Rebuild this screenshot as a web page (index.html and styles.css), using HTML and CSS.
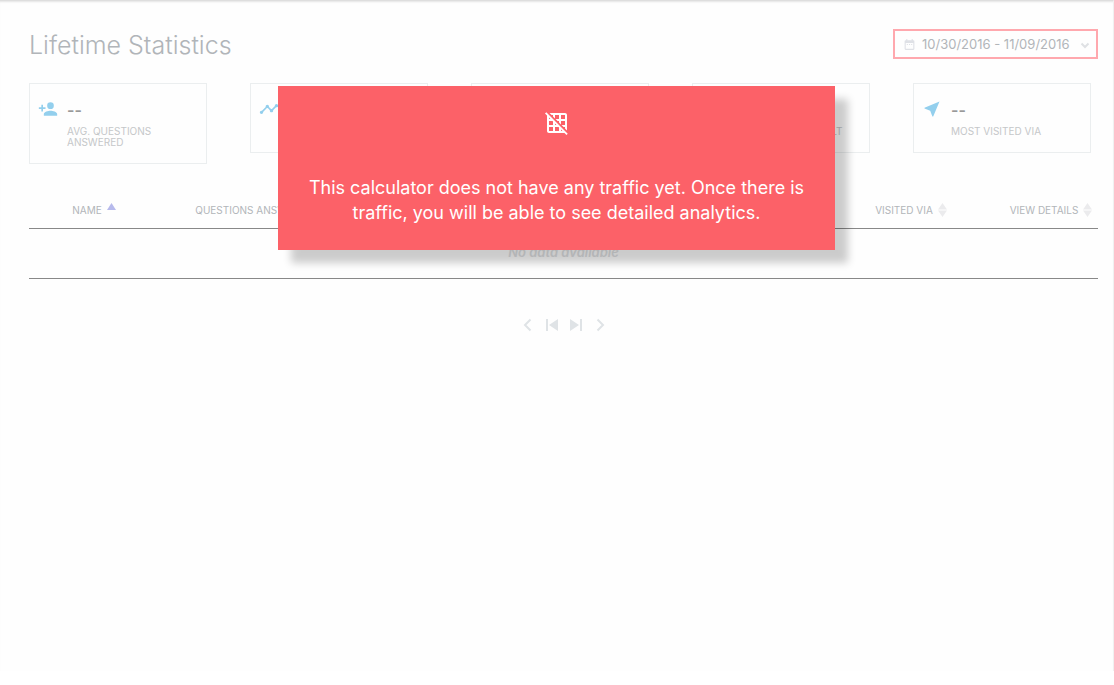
FILE: index.html
```html
<!DOCTYPE html>
<html lang="en">
<head>
<meta charset="utf-8">
<meta name="viewport" content="width=device-width, initial-scale=1">
<title>Lifetime Statistics</title>
<link rel="stylesheet" href="styles.css">
</head>
<body>
<main class="page">
  <header class="header">
    <h1 class="title">Lifetime Statistics</h1>
    <button class="range" type="button">
      <svg class="range-calendar" viewBox="0 0 24 24" aria-hidden="true"><path d="M19 4h-1V2h-2v2H8V2H6v2H5a2 2 0 0 0-2 2v14a2 2 0 0 0 2 2h14a2 2 0 0 0 2-2V6a2 2 0 0 0-2-2zm0 16H5V9h14v11zM7 11h2v2H7zm4 0h2v2h-2zm4 0h2v2h-2z"/></svg>
      <span>10/30/2016 - 11/09/2016</span>
      <svg class="range-chevron" viewBox="0 0 10 10" aria-hidden="true"><path d="M1.500 4.500 5 8l3.500-3.500"/></svg>
    </button>
  </header>

  <section class="cards">
    <article class="card">
      <svg class="card-icon" viewBox="0 0 24 24" aria-hidden="true"><path d="M15 12a4 4 0 1 0 0-8 4 4 0 0 0 0 8zm-9-2V7H4v3H1v2h3v3h2v-3h3v-2H6zm9 4c-2.670 0-8 1.340-8 4v2h16v-2c0-2.660-5.330-4-8-4z"/></svg>
      <div class="card-text"><strong class="value">--</strong><span class="label">AVG. QUESTIONS ANSWERED</span></div>
    </article>
    <article class="card">
      <svg class="card-icon" viewBox="0 0 24 24" aria-hidden="true"><path d="M23 8c0 1.100-.9 2-2 2-.18 0-.35-.02-.51-.07l-3.560 3.550c.05.16.07.34.07.52 0 1.100-.9 2-2 2s-2-.9-2-2c0-.18.02-.36.07-.52l-2.550-2.550c-.16.05-.34.07-.52.07s-.36-.02-.52-.07l-4.550 4.560c.05.16.07.33.07.51 0 1.100-.9 2-2 2s-2-.9-2-2 .9-2 2-2c.18 0 .35.02.51.07l4.560-4.550C8.020 9.360 8 9.180 8 9c0-1.100.9-2 2-2s2 .9 2 2c0 .18-.02.36-.07.52l2.550 2.550c.16-.05.34-.07.52-.07s.36.02.52.07l3.550-3.560C19.020 8.350 19 8.180 19 8c0-1.100.9-2 2-2s2 .9 2 2z"/></svg>
    </article>
    <article class="card"></article>
    <article class="card">
      <div class="card-icon"></div>
      <div class="card-text"><strong class="value">--</strong><span class="label">MOST RECENT RESULT</span></div>
    </article>
    <article class="card">
      <svg class="card-icon" viewBox="0 0 24 24" aria-hidden="true"><path d="M21 3 3 10.530v.98l6.840 2.650L12.480 21h.98L21 3z"/></svg>
      <div class="card-text"><strong class="value">--</strong><span class="label">MOST VISITED VIA</span></div>
    </article>
  </section>

  <table class="table">
    <colgroup><col class="col-name"><col class="col-answered"><col><col class="col-via"><col class="col-details"></colgroup>
    <thead>
      <tr>
        <th scope="col"><span class="heading">NAME <svg class="sort sorted" viewBox="0 0 9 14" aria-hidden="true"><path d="M4.500 0 9 7H0z"/></svg></span></th>
        <th scope="col"><span class="heading">QUESTIONS ANSWERED <svg class="sort" viewBox="0 0 9 14" aria-hidden="true"><path d="M4.500 0 9 6.500H0zM0 7.500h9L4.500 14z"/></svg></span></th>
        <td></td>
        <th scope="col"><span class="heading">VISITED VIA <svg class="sort" viewBox="0 0 9 14" aria-hidden="true"><path d="M4.500 0 9 6.500H0zM0 7.500h9L4.500 14z"/></svg></span></th>
        <th scope="col"><span class="heading">VIEW DETAILS <svg class="sort" viewBox="0 0 9 14" aria-hidden="true"><path d="M4.500 0 9 6.500H0zM0 7.500h9L4.500 14z"/></svg></span></th>
      </tr>
    </thead>
    <tbody><tr><td class="empty" colspan="5">No data available</td></tr></tbody>
  </table>

  <nav class="pager" aria-label="Pagination">
    <button type="button" aria-label="Previous"><svg viewBox="0 0 14 14"><path class="stroke" d="M9.500 1.500 4 7l5.500 5.500"/></svg></button>
    <button type="button" aria-label="First"><svg viewBox="0 0 14 14"><path d="M1 1h2v12H1zM13 1v12L4 7z"/></svg></button>
    <button type="button" aria-label="Last"><svg viewBox="0 0 14 14"><path d="M1 1v12l9-6zM11 1h2v12h-2z"/></svg></button>
    <button type="button" aria-label="Next"><svg viewBox="0 0 14 14"><path class="stroke" d="M4.500 1.500 10 7l-5.500 5.500"/></svg></button>
  </nav>

  <div class="notice" role="alert">
    <svg class="notice-icon" viewBox="0 0 24 24" aria-hidden="true"><path d="M8 4v1.450l2 2V4h4v4h-3.450l2 2H14v1.450l2 2V10h4v4h-3.450l2 2H20v1.450l2 2V4c0-1.100-.9-2-2-2H4.550l2 2H8zm8 0h4v4h-4V4zM1.270 1.270 0 2.550l2 2V20c0 1.100.9 2 2 2h15.460l2 2 1.270-1.270L1.270 1.270zM10 12.550 11.450 14H10v-1.450zm-6-6L5.450 8H4V6.550zM8 20H4v-4h4v4zm0-6H4v-4h3.450l.55.55V14zm6 6h-4v-4h3.450l.55.540V20zm2 0v-1.460L17.460 20H16z"/></svg>
    <p class="notice-text">This calculator does not have any traffic yet. Once there is traffic, you will be able to see detailed analytics.</p>
  </div>
</main>
</body>
</html>
```
FILE: styles.css
```css
* { box-sizing: border-box; }
body {
  margin: 0;
  font-family: Inter, "Open Sans", sans-serif;
  color: #b1b5b9;
  background: #fff;
}
button { font: inherit; color: inherit; cursor: pointer; }
.page {
  position: relative;
  min-height: calc(100vh - 14px);
  padding: 28px 15px 0 29px;
  background: #fefefe;
  border-top: 1px solid #dedede;
  border-right: 1px solid #f0f0f0;
  box-shadow: inset 0 2px 2px -1px #e4e4e4;
}
.header {
  display: flex;
  justify-content: space-between;
  align-items: flex-start;
}
.title {
  margin: 0;
  font-size: 25px;
  line-height: 32px;
  font-weight: 300;
}
.range {
  display: flex;
  align-items: center;
  gap: 6px;
  width: 205px;
  height: 30px;
  padding: 0 6px 0 8px;
  border: 2px solid #ffa8ae;
  background: none;
  font-size: 13px;
  line-height: 26px;
  white-space: nowrap;
}
.range span { flex: 1; text-align: left; }
.range-calendar { flex: none; width: 13px; height: 13px; fill: #dfe1e6; }
.range-chevron { flex: none; width: 10px; height: 10px; fill: none; stroke: #dfe1e4; stroke-width: 2; }
.cards {
  display: grid;
  grid-template-columns: repeat(5, 1fr);
  column-gap: 43px;
  align-items: start;
  margin: 22px 7px 0 0;
}
.card {
  display: flex;
  gap: 9px;
  min-height: 70px;
  padding: 15px 8px;
  border: 1px solid #ebeeef;
}
.card-icon { flex: none; width: 20px; height: 20px; fill: #93cfed; }
.card-text { display: flex; flex-direction: column; }
.value {
  font-size: 16px;
  line-height: 22px;
  font-weight: 600;
  color: #999;
}
.label {
  margin-top: 5px;
  font-size: 10px;
  line-height: 11px;
  color: #c5c7c9;
}
.table {
  width: 100%;
  margin-top: 29px;
  border-collapse: collapse;
  table-layout: fixed;
  border-bottom: 1px solid #888;
}
.col-name { width: 130px; }
.col-answered { width: 204px; }
.col-via { width: 186px; }
.col-details { width: 94px; }
.table th, .table td { padding: 0; }
.table thead { border-bottom: 1px solid #888; }
.table th {
  height: 35px;
  font-size: 10px;
  font-weight: 400;
  white-space: nowrap;
}
.heading { display: inline-flex; align-items: center; gap: 5px; }
.sort { width: 9px; height: 14px; fill: #ebebed; }
.sort.sorted { fill: #b7baec; }
.table .empty {
  height: 50px;
  padding-bottom: 2px;
  font-size: 13px;
  font-style: italic;
  font-weight: 600;
  text-align: center;
  color: #dfe1e3;
}
.pager {
  display: flex;
  justify-content: center;
  gap: 10px;
  margin-top: 39px;
}
.pager button { width: 14px; height: 14px; padding: 0; border: 0; background: none; }
.pager svg { display: block; width: 14px; height: 14px; fill: #dfe3e6; }
.pager .stroke { fill: none; stroke: #dfe3e6; stroke-width: 2; }
.notice {
  position: absolute;
  top: 85px;
  left: 25%;
  width: 50%;
  padding: 25px 20px;
  background: #fc6168;
  box-shadow: 13px 13px 8px rgba(0, 0, 0, 0.2);
  color: #fff;
  text-align: center;
}
.notice-icon { display: block; width: 24px; height: 24px; margin: 0 auto; fill: #fff; }
.notice-text { margin: 40px 0 0; font-size: 18px; line-height: 25px; }
```
